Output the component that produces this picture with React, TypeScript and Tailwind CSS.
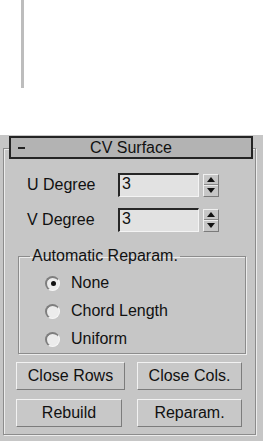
import React from 'react';

// 3ds Max style "CV Surface" rollout
const font = { fontFamily: '"Liberation Sans", Arial, sans-serif' };

function Spinner() {
  return (
    <div className="flex flex-col w-[16px] h-[23px] border-l border-t border-[#f0f0f0] border-r border-b border-r-[#7a7a7a] border-b-[#7a7a7a] bg-[#c6c6c6]">
      <div className="flex-1 flex items-center justify-center border-b border-[#8a8a8a]">
        <svg width="8" height="5" viewBox="0 0 8 5">
          <path d="M4 0 L8 5 L0 5 Z" fill="#111" />
        </svg>
      </div>
      <div className="flex-1 flex items-center justify-center border-t border-[#ececec]">
        <svg width="8" height="5" viewBox="0 0 8 5">
          <path d="M0 0 L8 0 L4 5 Z" fill="#111" />
        </svg>
      </div>
    </div>
  );
}

function DegreeRow({ label, value }: { label: string; value: string }) {
  return (
    <div className="flex items-center h-[24px] pl-[23px]">
      <span className="w-[91px] text-[16px] text-[#111]">{label}</span>
      <div className="w-[81px] h-[24px] bg-[#e2e2e2] border-t-2 border-l-2 border-[#262626] border-r border-b border-r-[#f4f4f4] border-b-[#f4f4f4] pl-[2px] text-[16px] leading-[18px] text-[#111]">
        {value}
      </div>
      <div className="ml-[4px]">
        <Spinner />
      </div>
    </div>
  );
}

function Radio({ label, checked }: { label: string; checked?: boolean }) {
  return (
    <div className="flex items-center h-[20px] pl-[26px]">
      <div className="w-[15px] h-[15px] rounded-full bg-[#ececec] border-t-2 border-l-2 border-[#7e7e7e] border-r border-b border-r-[#f6f6f6] border-b-[#f6f6f6] flex items-center justify-center">
        {checked && <div className="w-[5px] h-[5px] rounded-full bg-[#111]" />}
      </div>
      <span className="ml-[11px] text-[16px] text-[#111]">{label}</span>
    </div>
  );
}

function Btn({ label, w }: { label: string; w: string }) {
  return (
    <button
      className={`${w} h-[28px] bg-[#c8c8c8] border border-t-[#f2f2f2] border-l-[#f2f2f2] border-r-[#7c7c7c] border-b-[#7c7c7c] text-[16px] text-[#111] flex items-center justify-center`}
    >
      {label}
    </button>
  );
}

export default function App() {
  return (
    <div className="w-[263px] h-[441px] bg-white overflow-hidden" style={font}>
      {/* left scroll line */}
      <div className="ml-[21px] w-[3px] h-[88px] bg-[#bdbdbd]" />

      <div className="mt-[47px] h-[306px] bg-[#c6c6c6] pt-[13px]">
        {/* rollout frame */}
        <div className="ml-[3px] w-[253px] h-[287px] border border-[#8c8c8c] shadow-[inset_1px_1px_0_#ececec,1px_1px_0_#ececec]">
          {/* title bar */}
          <div className="mt-[-13px] ml-[5px] w-[244px] h-[23px] bg-[#b3b3b3] border-2 border-[#242424] flex items-center text-[16px] text-[#111]">
            <div className="ml-[7px] w-[7px] h-[2px] bg-[#222]" />
            <span className="flex-1 text-center pr-[14px]">CV Surface</span>
          </div>

          <div className="mt-[14px]">
            <DegreeRow label="U Degree" value="3" />
          </div>
          <div className="mt-[11px]">
            <DegreeRow label="V Degree" value="3" />
          </div>

          {/* Automatic Reparam. group */}
          <fieldset className="mt-[15px] ml-[14px] w-[228px] border border-[#8c8c8c] shadow-[inset_1px_1px_0_#ececec,1px_1px_0_#ececec] pb-[4px]">
            <legend className="ml-[11px] px-[2px] text-[16px] leading-[18px] text-[#111]">Automatic Reparam.</legend>
            <div className="flex flex-col gap-[8px] mt-[8px]">
              <Radio label="None" checked />
              <Radio label="Chord Length" />
              <Radio label="Uniform" />
            </div>
          </fieldset>

          <div className="mt-[8px] ml-[12px] flex gap-[12px]">
            <Btn label="Close Rows" w="w-[109px]" />
            <Btn label="Close Cols." w="w-[105px]" />
          </div>
          <div className="mt-[9px] ml-[12px] flex gap-[15px]">
            <Btn label="Rebuild" w="w-[106px]" />
            <Btn label="Reparam." w="w-[105px]" />
          </div>
        </div>
      </div>
    </div>
  );
}
